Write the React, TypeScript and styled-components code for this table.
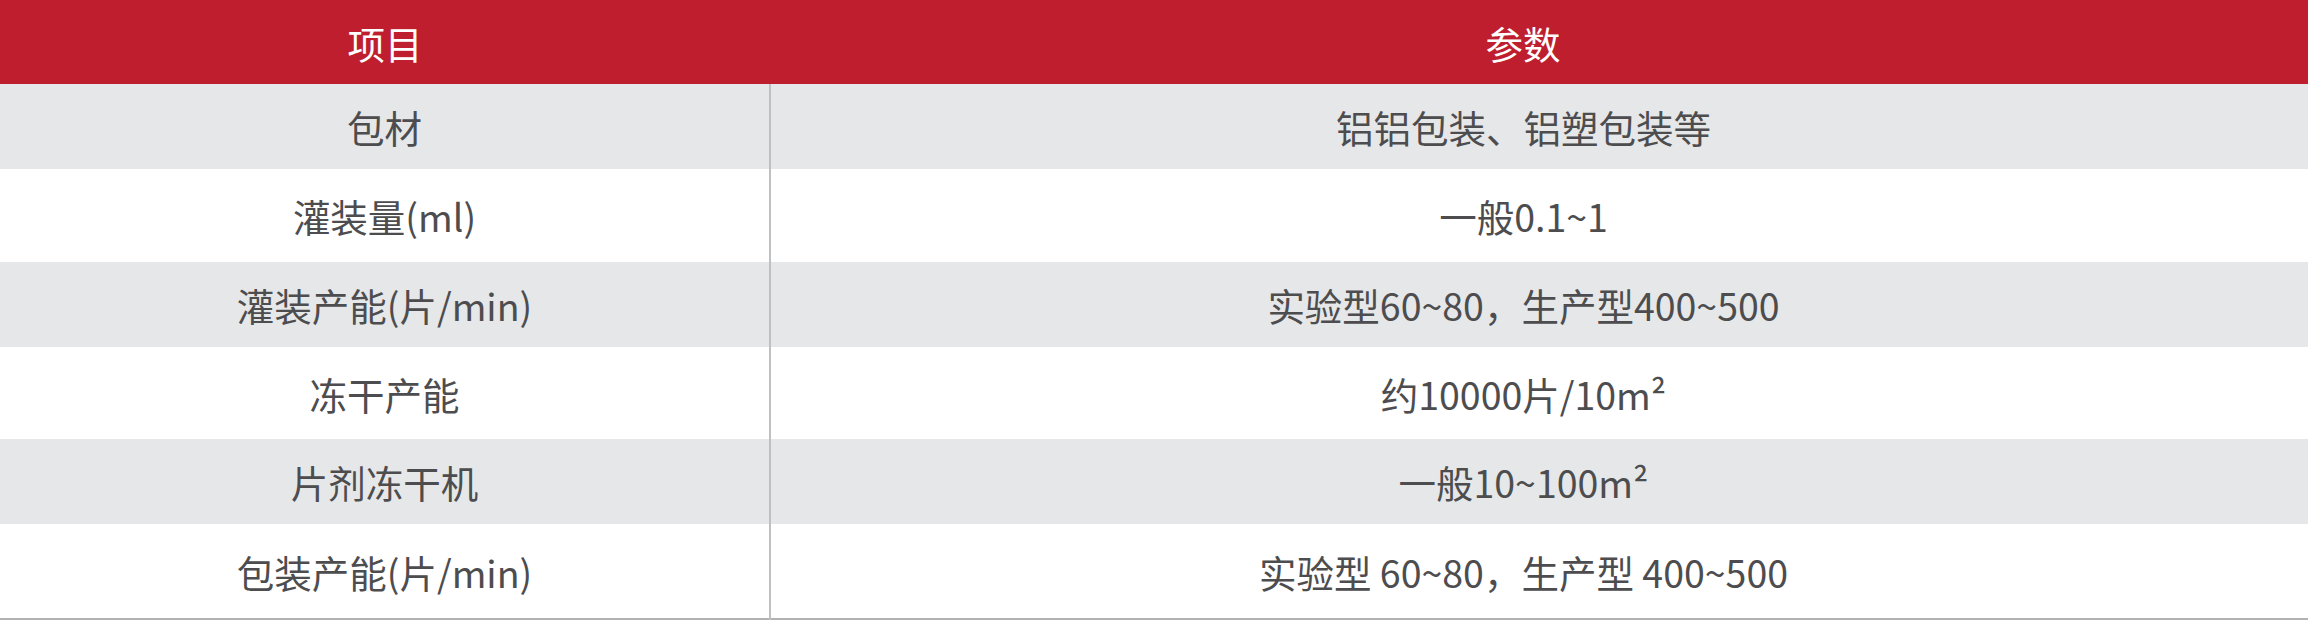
import React from 'react';
import styled, { createGlobalStyle } from 'styled-components';

const GlobalStyle = createGlobalStyle`
  html, body {
    margin: 0;
    padding: 0;
    background: #fff;
  }
  body {
    font-family: "Noto Sans CJK SC", "Noto Sans", sans-serif;
  }
`;

const Table = styled.table`
  width: 2308px;
  border-collapse: collapse;
  table-layout: fixed;
  border-bottom: 2px solid #b1b2b4;
  font-size: 37.5px;
`;

const HeadCell = styled.th<{ $right?: boolean }>`
  height: 84px;
  padding: 0 ${p => (p.$right ? '32px' : '0')} 0 0;
  background: #be1e2d;
  color: #fff;
  font-weight: 400;
  text-align: center;
  vertical-align: middle;
`;

const Row = styled.tr<{ $shade: boolean; $h: number }>`
  height: ${p => p.$h}px;
  background: ${p => (p.$shade ? '#e6e7e8' : '#fff')};
`;

const Cell = styled.td<{ $right?: boolean }>`
  padding: 0 ${p => (p.$right ? '32px' : '0')} 0 0;
  color: #4d4d4f;
  text-align: center;
  vertical-align: middle;
  border-left: ${p => (p.$right ? '2px solid #bfc0c2' : 'none')};
  white-space: nowrap;
`;

const rows: { item: string; value: string; h: number }[] = [
  { item: '包材', value: '铝铝包装、铝塑包装等', h: 85 },
  { item: '灌装量(ml)', value: '一般0.1~1', h: 93 },
  { item: '灌装产能(片/min)', value: '实验型60~80，生产型400~500', h: 85 },
  { item: '冻干产能', value: '约10000片/10m²', h: 92 },
  { item: '片剂冻干机', value: '一般10~100m²', h: 85 },
  { item: '包装产能(片/min)', value: '实验型 60~80，生产型 400~500', h: 95 },
];

export default function App() {
  return (
    <>
      <GlobalStyle />
      <Table>
        <colgroup>
          <col style={{ width: 770 }} />
          <col />
        </colgroup>
        <thead>
          <tr>
            <HeadCell>项目</HeadCell>
            <HeadCell $right>参数</HeadCell>
          </tr>
        </thead>
        <tbody>
          {rows.map((r, i) => (
            <Row key={r.item} $shade={i % 2 === 0} $h={r.h}>
              <Cell>{r.item}</Cell>
              <Cell $right>{r.value}</Cell>
            </Row>
          ))}
        </tbody>
      </Table>
    </>
  );
}
